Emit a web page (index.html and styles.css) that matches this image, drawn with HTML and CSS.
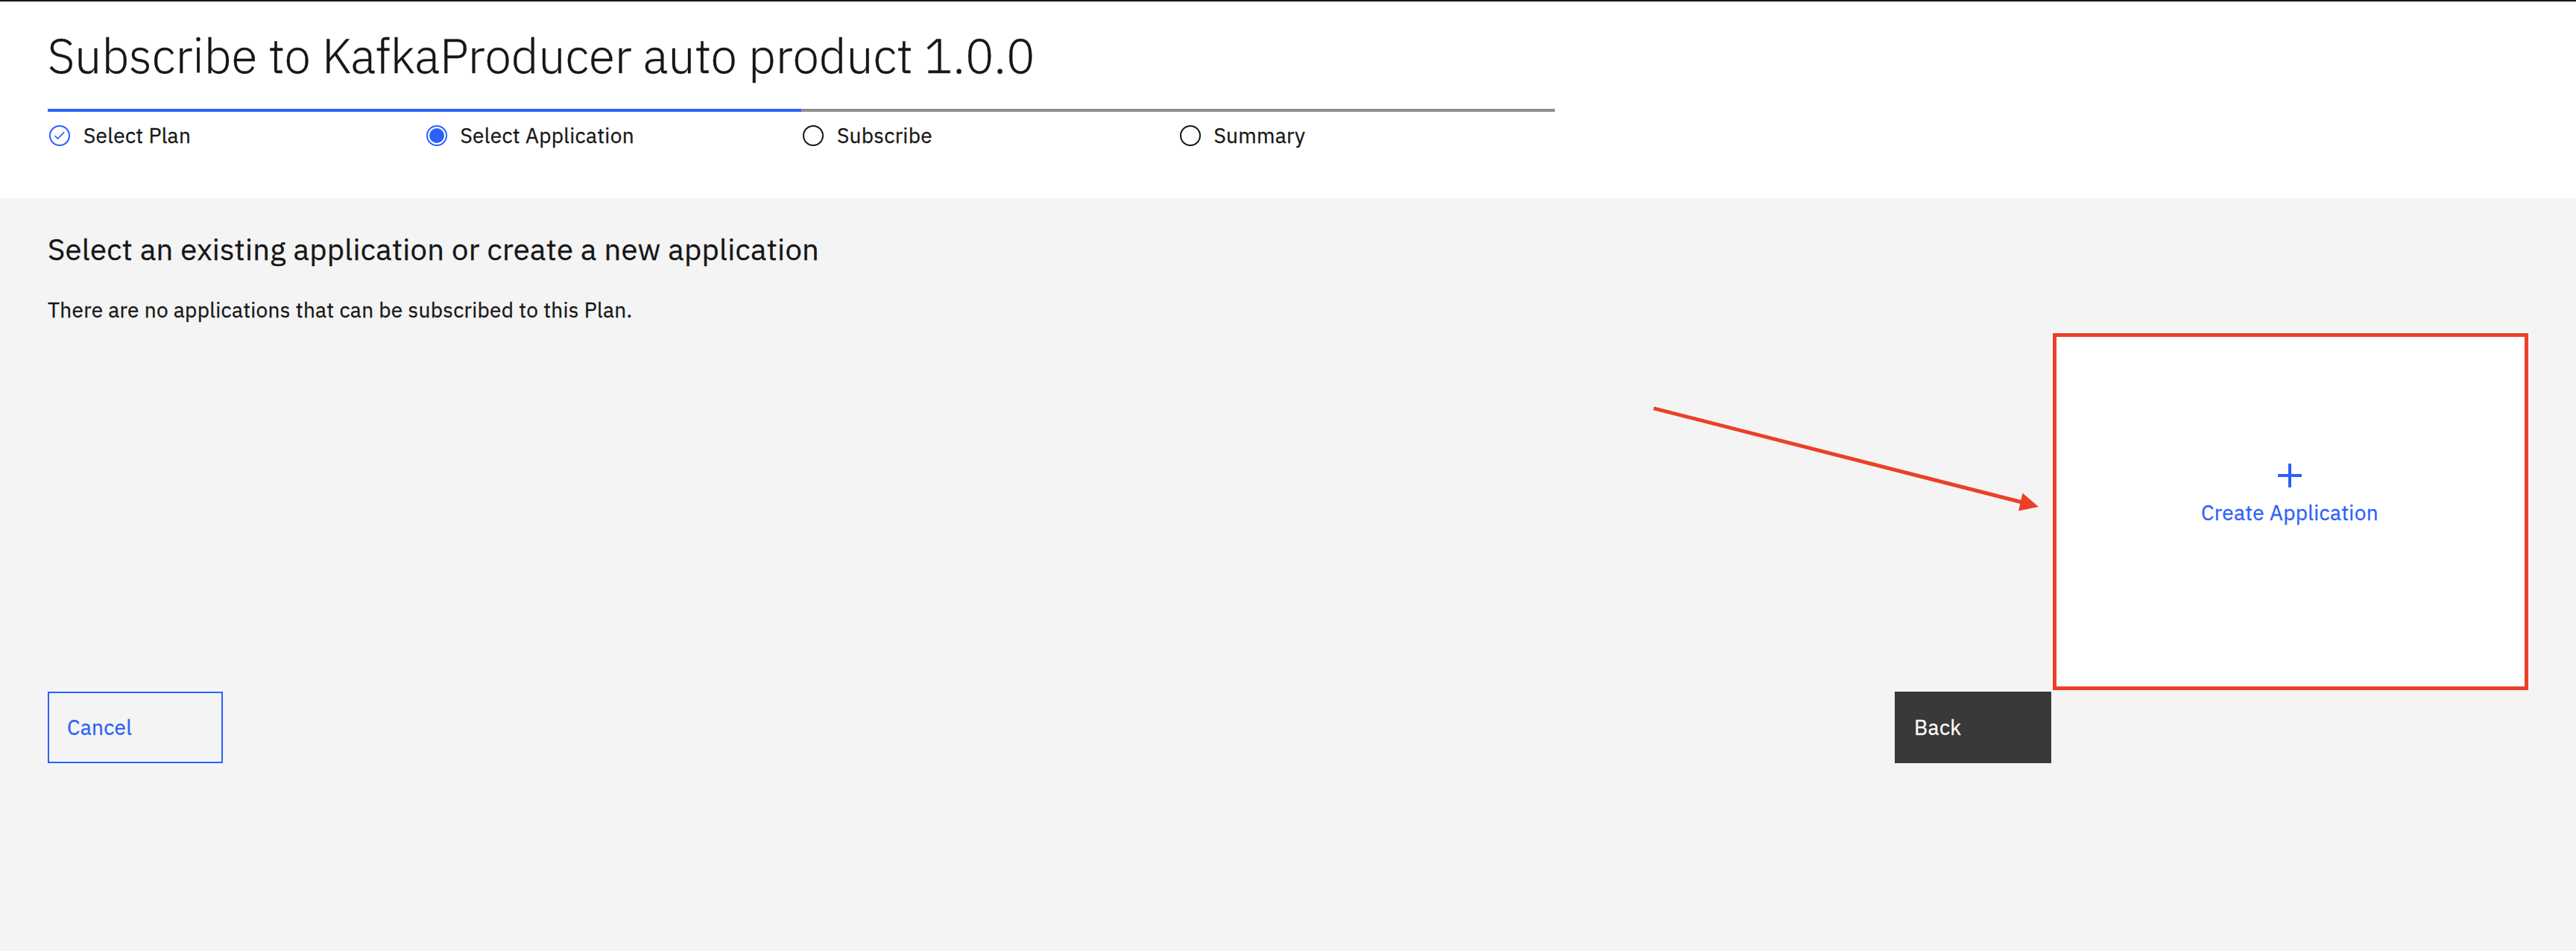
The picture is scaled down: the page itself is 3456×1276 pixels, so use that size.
FILE: index.html
```
<!DOCTYPE html>
<html lang="en">
<head>
<meta charset="utf-8">
<title>Subscribe to KafkaProducer auto product 1.0.0</title>
<link rel="stylesheet" href="styles.css">
</head>
<body>
<header class="page-header">
  <h1 class="page-title">Subscribe to KafkaProducer auto product 1.0.0</h1>
  <ol class="progress">
    <li class="step step--done">
      <svg class="step-icon" viewBox="0 0 32 32"><circle cx="16" cy="16" r="13" fill="none" stroke="currentColor" stroke-width="2"/><path d="M9.6 16l3.9 4 8.6-8.6" fill="none" stroke="currentColor" stroke-width="1.7"/></svg>
      <span class="step-label">Select Plan</span>
    </li>
    <li class="step step--current">
      <svg class="step-icon" viewBox="0 0 32 32"><circle cx="16" cy="16" r="13" fill="none" stroke="currentColor" stroke-width="2"/><circle cx="16" cy="16" r="10" fill="currentColor"/></svg>
      <span class="step-label">Select Application</span>
    </li>
    <li class="step">
      <svg class="step-icon" viewBox="0 0 32 32"><circle cx="16" cy="16" r="13" fill="none" stroke="currentColor" stroke-width="2"/></svg>
      <span class="step-label">Subscribe</span>
    </li>
    <li class="step">
      <svg class="step-icon" viewBox="0 0 32 32"><circle cx="16" cy="16" r="13" fill="none" stroke="currentColor" stroke-width="2"/></svg>
      <span class="step-label">Summary</span>
    </li>
  </ol>
</header>
<main class="content">
  <h2 class="section-title">Select an existing application or create a new application</h2>
  <p class="message">There are no applications that can be subscribed to this Plan.</p>
  <div class="cards">
    <a class="create-card">
      <svg class="plus" viewBox="0 0 32 32"><path d="M16 0v32M0 16h32" stroke="currentColor" stroke-width="4"/></svg>
      <span>Create Application</span>
    </a>
  </div>
  <div class="actions">
    <button class="button button--cancel">Cancel</button>
    <button class="button button--back">Back</button>
  </div>
</main>
<svg class="arrow" viewBox="0 0 520 144"><path d="M.5 3.8L495 130" stroke="currentColor" stroke-width="5"/><path d="M517 136l-21.5-18.5-5.5 24z" fill="currentColor"/></svg>
</body>
</html>
```
FILE: styles.css
```
* { box-sizing: border-box; }

body {
  margin: 0;
  min-height: 1276px;
  position: relative;
  background: #f4f4f4;
  color: #161616;
  font: 400 28px/40px "IBM Plex Sans", Roboto, sans-serif;
  letter-spacing: 0.32px;
  -webkit-text-stroke: 0.3px currentColor;
}

h1, h2, p, ol { margin: 0; padding: 0; font-weight: 400; }

.page-header {
  height: 266px;
  padding: 32px 64px 0;
  border-top: 2px solid #161616;
  background: #fff;
}

.page-title {
  margin: 0 0 32px;
  font-size: 64px;
  font-weight: 300;
  line-height: 80px;
  letter-spacing: 0;
}

.progress {
  display: grid;
  grid-template-columns: repeat(4, 1fr);
  width: 2022px;
  list-style: none;
}

.step {
  display: flex;
  align-items: center;
  gap: 16px;
  padding-top: 16px;
  border-top: 4px solid #8d8d8d;
  line-height: 32px;
}

.step--done, .step--current { border-color: #2b61f8; }
.step-icon { width: 32px; height: 32px; flex: none; }
.step--done .step-icon, .step--current .step-icon { color: #2b61f8; }

.content { padding: 40px 64px 0; }

.section-title {
  margin: 0 0 34px;
  font-size: 40px;
  line-height: 56px;
}

.cards {
  display: flex;
  justify-content: flex-end;
  margin-top: 10px;
}

.create-card {
  position: relative;
  display: flex;
  flex-direction: column;
  align-items: center;
  gap: 14px;
  width: 640px;
  height: 480px;
  padding-top: 176px;
  background: #fff;
  color: #2b61f8;
}

/* highlight frame drawn over the card */
.create-card::after {
  content: "";
  position: absolute;
  inset: 1px 0 0 2px;
  border: 5px solid #eb4026;
}

.plus { width: 32px; height: 32px; }

.actions {
  display: flex;
  justify-content: space-between;
  width: 2688px;
  margin-top: 2px;
}

.button {
  height: 96px;
  padding: 0 24px;
  border: 2px solid #2b61f8;
  border-radius: 0;
  background: transparent;
  color: #2b61f8;
  font: inherit;
  letter-spacing: inherit;
  text-align: left;
}

.button--cancel { width: 235px; }
.button--back { width: 210px; border-color: #393939; background: #393939; color: #fff; }

.arrow {
  position: absolute;
  left: 2218px;
  top: 544px;
  width: 520px;
  height: 144px;
  color: #eb4026;
}
```
